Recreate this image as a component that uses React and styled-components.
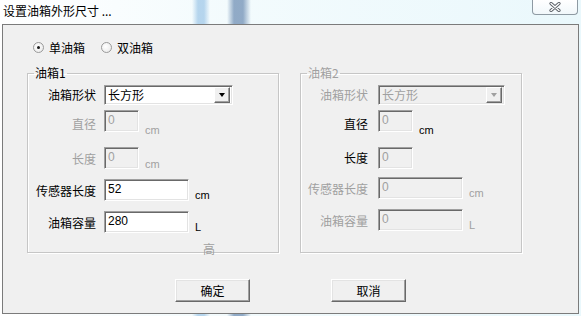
import React from 'react';
import styled, { createGlobalStyle } from 'styled-components';

const GlobalStyle = createGlobalStyle`
  html, body { margin: 0; padding: 0; }
  body {
    font-family: "Noto Sans CJK SC", "Liberation Sans", sans-serif;
    font-size: 12px;
    background: #f2fbfd;
    overflow: hidden;
  }
`;

const Window = styled.div`
  width: 581px;
  height: 316px;
  display: flex;
  flex-direction: column;
  background:
    linear-gradient(90deg, transparent 192px, rgba(160, 200, 232, 0.75) 198px, rgba(160, 200, 232, 0.75) 204px, transparent 210px,
      transparent 227px, rgba(120, 150, 185, 0.8) 234px, rgba(120, 150, 185, 0.8) 243px, transparent 251px),
    linear-gradient(90deg, #ffffff 0%, #f3fbfd 40%, #eaf8fc 100%);
`;

const TitleBar = styled.div`
  height: 24px;
  display: flex;
  align-items: flex-start;
  flex: none;
`;

const Title = styled.div`
  margin: 4px 0 0 3px;
  line-height: 14px;
  color: #000;
`;

const CloseButton = styled.div`
  margin: 0 3px 0 auto;
  width: 44px;
  height: 14px;
  border: 1px solid #8e9aa3;
  border-top: none;
  border-radius: 0 0 4px 4px;
  background: linear-gradient(#ffffff, #f1f8fb);
  display: flex;
  align-items: center;
  justify-content: center;
`;

const Frame = styled.div`
  margin: 0 2px;
  height: 290px;
  box-sizing: border-box;
  border: 1px solid #7b7b7b;
  background: #f0f0f0;
  padding: 14px 0 0 24px;
  flex: none;
`;

const RadioRow = styled.div`
  display: flex;
  gap: 16px;
  margin-left: 6px;
  height: 16px;
  align-items: center;
`;

const RadioOption = styled.label`
  display: flex;
  align-items: center;
  gap: 5px;
  color: #000;
`;

const RadioCircle = styled.span`
  width: 9px;
  height: 9px;
  border-radius: 50%;
  border: 1px solid #9a9a9a;
  background: radial-gradient(circle at 40% 40%, #ffffff, #e6e6e6);
  display: flex;
  align-items: center;
  justify-content: center;
  &::after {
    content: '';
    width: 3px;
    height: 3px;
    border-radius: 50%;
    background: ${p => (p.$checked ? '#1a1a1a' : 'transparent')};
  }
`;

const Groups = styled.div`
  display: flex;
  gap: 21px;
  margin-top: 11px;
`;

const Group = styled.fieldset`
  margin: 0;
  padding: 0;
  width: ${p => p.$width}px;
  height: 187px;
  box-sizing: border-box;
  border: 1px solid #c6c6c6;
  box-shadow: inset 1px 1px 0 #ffffff, 1px 1px 0 #ffffff;
  min-width: 0;
`;

const Legend = styled.legend`
  margin-left: 6px;
  padding: 0 1px;
  line-height: 14px;
  color: ${p => (p.$disabled ? '#a0a0a0' : '#000')};
`;

const GroupBody = styled.div`
  display: flex;
  flex-direction: column;
  padding-top: 5px;
`;

const Row = styled.div`
  display: flex;
  align-items: flex-start;
  margin-top: ${p => p.$top}px;
`;

const Label = styled.div`
  width: ${p => p.$w}px;
  text-align: right;
  margin-right: ${p => p.$gap}px;
  line-height: 14px;
  align-self: center;
  color: ${p => (p.$disabled ? '#a0a0a0' : '#000')};
  white-space: nowrap;
`;

const Input = styled.div`
  width: ${p => p.$w}px;
  height: 22px;
  box-sizing: border-box;
  border-top: 1px solid #a0a0a0;
  border-left: 1px solid #a0a0a0;
  border-bottom: 1px solid #ffffff;
  border-right: 1px solid #ffffff;
  box-shadow: inset 1px 1px 0 #696969, inset -1px -1px 0 #e3e3e3;
  background: ${p => (p.$disabled ? '#f0f0f0' : '#ffffff')};
  color: ${p => (p.$disabled ? '#a0a0a0' : '#000')};
  padding: 2px 0 0 3px;
  line-height: 14px;
  font-family: "Liberation Sans", "Noto Sans CJK SC", sans-serif;
  font-size: 12px;
`;

const Select = styled.div`
  width: ${p => p.$w}px;
  height: 20px;
  box-sizing: border-box;
  border-top: 1px solid #a0a0a0;
  border-left: 1px solid #a0a0a0;
  border-bottom: 1px solid #ffffff;
  border-right: 1px solid #ffffff;
  box-shadow: inset 1px 1px 0 #696969, inset -1px -1px 0 #e3e3e3;
  background: ${p => (p.$disabled ? '#f0f0f0' : '#ffffff')};
  color: ${p => (p.$disabled ? '#a0a0a0' : '#000')};
  display: flex;
  align-items: center;
  padding: 2px 2px 2px 3px;
  line-height: 14px;
`;

const SelectText = styled.span`
  flex: 1;
`;

const ArrowButton = styled.span`
  width: 16px;
  height: 16px;
  box-sizing: border-box;
  background: #f0f0f0;
  border-top: 1px solid #ffffff;
  border-left: 1px solid #ffffff;
  border-bottom: 1px solid #696969;
  border-right: 1px solid #696969;
  box-shadow: inset -1px -1px 0 #a0a0a0;
  display: flex;
  align-items: center;
  justify-content: center;
  &::after {
    content: '';
    border-left: 3.5px solid transparent;
    border-right: 3.5px solid transparent;
    border-top: 4px solid ${p => (p.$disabled ? '#a0a0a0' : '#000')};
  }
`;

const Unit = styled.div`
  margin: ${p => p.$drop}px 0 0 6px;
  line-height: 14px;
  font-family: "Liberation Sans", sans-serif;
  font-size: 11px;
  color: ${p => (p.$disabled ? '#a0a0a0' : '#000')};
`;

const Hint = styled.div`
  margin: 8px 0 0 175px;
  line-height: 14px;
  color: #a0a0a0;
`;

const ButtonRow = styled.div`
  display: flex;
  justify-content: center;
  gap: 81px;
  margin: 26px 0 0 -24px;
`;

const Button = styled.div`
  width: 75px;
  height: 23px;
  box-sizing: border-box;
  background: #f0f0f0;
  border-top: 1px solid #ffffff;
  border-left: 1px solid #ffffff;
  border-bottom: 1px solid #696969;
  border-right: 1px solid #696969;
  box-shadow: inset -1px -1px 0 #a0a0a0, inset 1px 1px 0 #e3e3e3;
  display: flex;
  align-items: center;
  justify-content: center;
  color: #000;
`;

function CloseGlyph() {
  return (
    <svg width="12" height="10" viewBox="0 0 12 10">
      <path d="M2 1.5 L10 8.5 M10 1.5 L2 8.5" stroke="#5a5f66" strokeWidth="3.2" strokeLinecap="round" fill="none" />
      <path d="M2 1.5 L10 8.5 M10 1.5 L2 8.5" stroke="#ffffff" strokeWidth="1.4" strokeLinecap="round" fill="none" />
    </svg>
  );
}

function TankGroup({ title, disabled, width, labelW, gap, dimDisabled }) {
  const big = 85;
  return (
    <Group $width={width}>
      <Legend $disabled={disabled}>{title}</Legend>
      <GroupBody>
        <Row $top={0}>
          <Label $w={labelW} $gap={gap} $disabled={disabled}>油箱形状</Label>
          <Select $w={disabled ? 127 : 129} $disabled={disabled}>
            <SelectText>长方形</SelectText>
            <ArrowButton $disabled={disabled} />
          </Select>
        </Row>
        <Row $top={5}>
          <Label $w={labelW} $gap={gap} $disabled={dimDisabled}>直径</Label>
          <Input $w={35} $disabled>0</Input>
          <Unit $drop={13} $disabled={dimDisabled}>cm</Unit>
        </Row>
        <Row $top={10}>
          <Label $w={labelW} $gap={gap} $disabled={dimDisabled}>长度</Label>
          <Input $w={35} $disabled>0</Input>
          {!disabled && <Unit $drop={10} $disabled={dimDisabled}>cm</Unit>}
        </Row>
        <Row $top={8}>
          <Label $w={labelW} $gap={gap} $disabled={disabled}>传感器长度</Label>
          <Input $w={big} $disabled={disabled}>{disabled ? '0' : '52'}</Input>
          <Unit $drop={9} $disabled={disabled}>cm</Unit>
        </Row>
        <Row $top={9}>
          <Label $w={labelW} $gap={gap} $disabled={disabled}>油箱容量</Label>
          <Input $w={big} $disabled={disabled}>{disabled ? '0' : '280'}</Input>
          <Unit $drop={9} $disabled={disabled}>L</Unit>
        </Row>
        {!disabled && <Hint>高</Hint>}
      </GroupBody>
    </Group>
  );
}

export default function App() {
  return (
    <Window>
      <GlobalStyle />
      <TitleBar>
        <Title>设置油箱外形尺寸 ...</Title>
        <CloseButton>
          <CloseGlyph />
        </CloseButton>
      </TitleBar>
      <Frame>
        <RadioRow>
          <RadioOption>
            <RadioCircle $checked />
            单油箱
          </RadioOption>
          <RadioOption>
            <RadioCircle />
            双油箱
          </RadioOption>
        </RadioRow>
        <Groups>
          <TankGroup title="油箱1" width={252} labelW={68} gap={8} dimDisabled />
          <TankGroup title="油箱2" width={222} labelW={67} gap={10} disabled dimDisabled={false} />
        </Groups>
        <ButtonRow>
          <Button>确定</Button>
          <Button>取消</Button>
        </ButtonRow>
      </Frame>
    </Window>
  );
}
